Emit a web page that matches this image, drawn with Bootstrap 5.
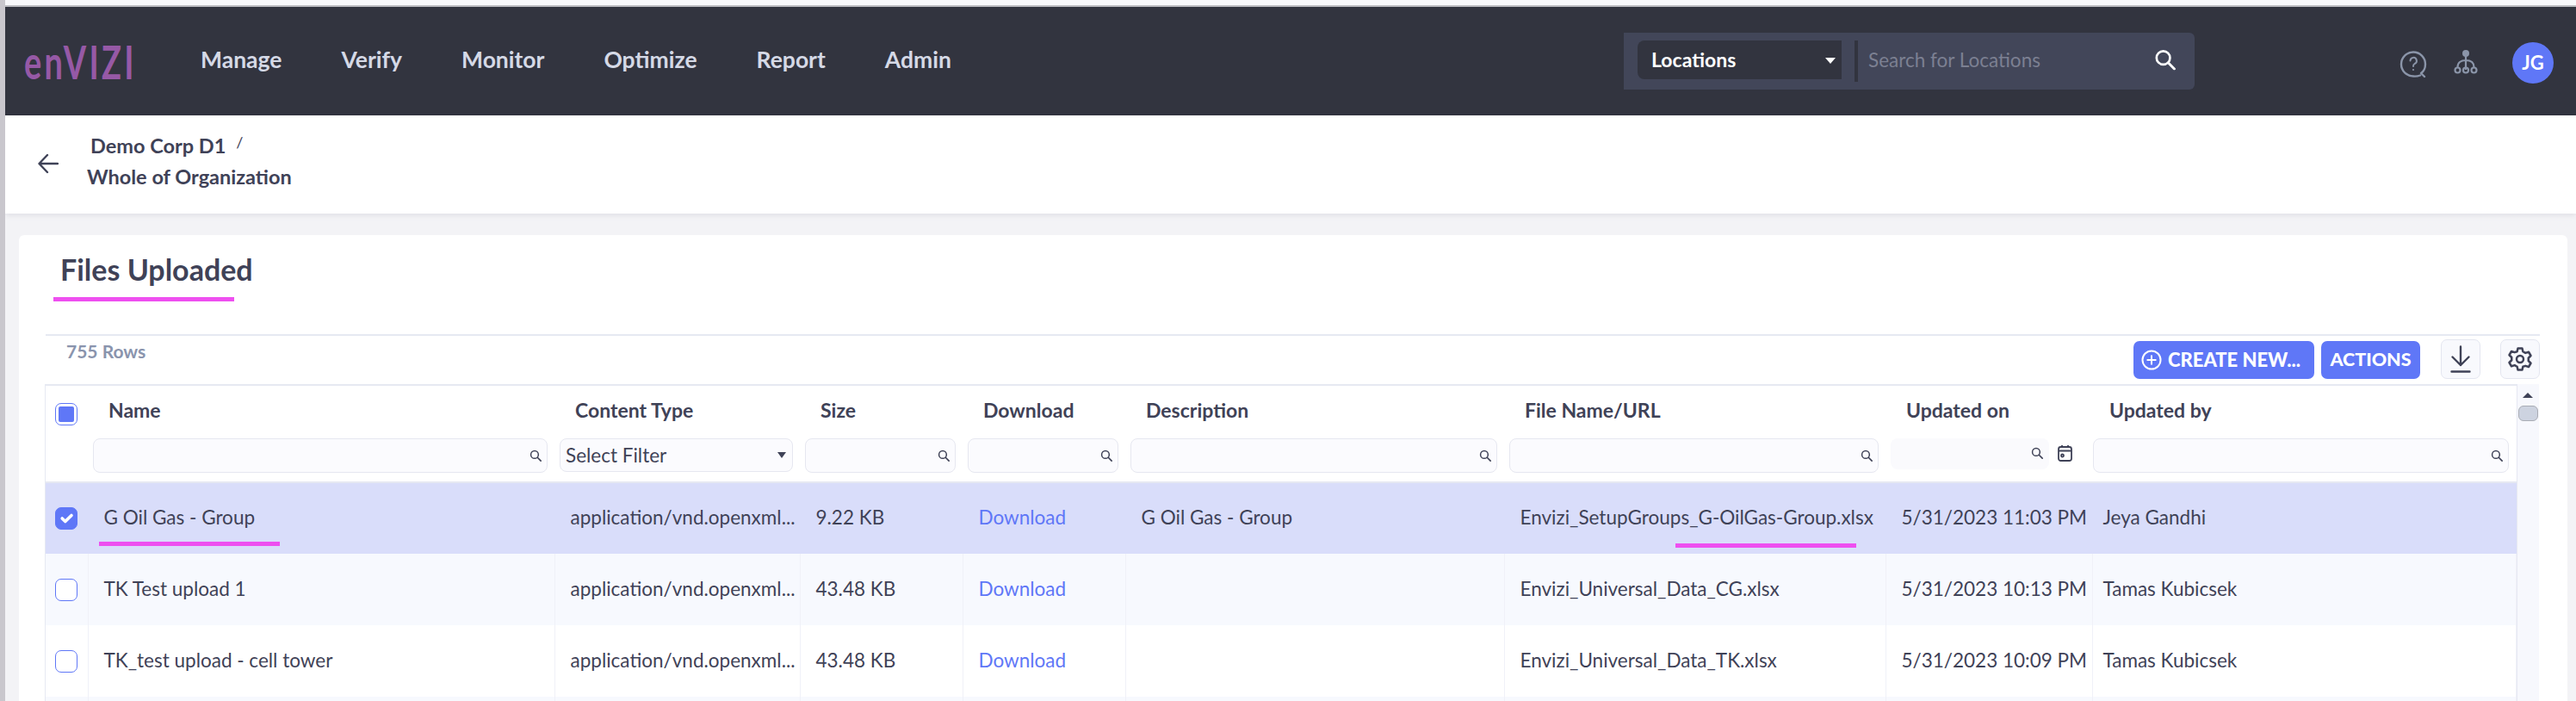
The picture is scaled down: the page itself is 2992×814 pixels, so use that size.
<!DOCTYPE html>
<html lang="en">
<head>
    <meta charset="UTF-8">
    <meta name="viewport" content="width=device-width, initial-scale=1.0">
    <title>Files Uploaded</title>
    <link href="https://cdn.jsdelivr.net/npm/bootstrap@5.3.0/dist/css/bootstrap.min.css" rel="stylesheet">
    <style>
        html, body { height: 100%; overflow: hidden; }
        body {
            font-family: Lato, "Noto Sans", sans-serif;
            font-size: 22.500px;
            color: #3f4257;
            background: #f3f3f6;
            border-left: 6px solid #c9c7cd;
        }
        .top-strip { height: 8px; background: #f8f8fb; border-bottom: 2px solid #bdbdc2; }
        .main-bar { height: 126px; background: #32343f; padding: 0 26px 0 22px; --bs-navbar-nav-link-padding-x: 0; }
        .brand-text {
            width: 205px;
            color: #9659a6;
            font-size: 38px;
            font-weight: 700;
            letter-spacing: 3.300px;
            line-height: 1;
            transform: scaleY(1.4);
            transform-origin: left center;
        }
        .main-links { gap: 69px; margin-top: -2px; }
        .main-links .nav-link { padding: 0; color: #d5d9e6; font-size: 26.500px; font-weight: 700; }
        .search-wrap { width: 663px; height: 66px; margin-right: 238px; background: #424659; border-radius: 0 6px 6px 0; padding: 9px 22px 12px 16px; }
        .scope-box { width: 237px; height: 45px; }
        .scope-box .form-select {
            height: 45px;
            padding: 0 0 0 16px;
            background: #32343f;
            border: 0;
            border-radius: 8px 0 0 8px;
            color: #fff;
            font-size: 23px;
            font-weight: 700;
        }
        .caret-down { position: absolute; width: 0; height: 0; border-left: 6px solid transparent; border-right: 6px solid transparent; border-top: 7px solid #fff; right: 7px; top: 20px; }
        .search-split { width: 4px; height: 48px; margin-left: 15px; background: #32343f; }
        .search-field {
            height: 45px;
            padding: 0 0 0 12px;
            background: transparent;
            border: 0;
            color: #fff;
            font-size: 22.500px;
        }
        .search-field::placeholder { color: #7c8092; }
        .search-field:focus { background: transparent; box-shadow: none; }
        .side-icons { color: #8b95a9; }
        .help-icon { margin-top: 6px; }
        .user-circle { width: 48px; height: 48px; margin: 3px 0 0 40px; background: #5f77f7; color: #fff; font-size: 22px; font-weight: 700; }
        .crumb-bar { height: 114px; background: #fff; box-shadow: 0 2px 6px rgba(60, 60, 90, .1); padding: 0 0 9px 38px; position: relative; }
        .back-arrow { margin-top: 6px; }
        .crumb-text { margin-left: 33px; font-size: 23.500px; font-weight: 700; line-height: 1; }
        .crumb-top { padding-left: 4px; margin-bottom: 13px; }
        .crumb-sep { font-weight: 400; font-size: 18px; margin-left: 12px; vertical-align: 6px; }
        .page-body { padding: 25px 10px 0 16px; }
        .sheet { background: #fff; padding: 0 32px 0 31px; height: 541px; overflow: hidden; border-radius: 6px 6px 0 0; }
        .sheet-title { height: 115px; padding: 20px 0 0 17px; margin: 0; font-size: 34px; font-weight: 700; color: #3f4257; position: relative; }
        .pink-line { position: absolute; height: 5px; width: 210px; background: #ee4ff0; }
        .title-line { left: 9px; top: 72px; }
        .name-line { left: 12px; top: 68px; }
        .file-line { left: 198px; top: 70px; }
        .tool-row { height: 58px; border-top: 2px solid #e6e9f2; padding: 6px 0 0 24px; }
        .row-count { color: #8a94ad; font-size: 21px; font-weight: 700; line-height: 24px; margin-top: 0; }
        .blue-btn { height: 44px; margin-top: 0; padding: 0; background: #5f77f7; border: 0; border-radius: 7px; color: #fff; font-size: 21.500px; font-weight: 900; line-height: 1; }
        .create-btn { width: 210px; gap: 7px; padding-left: 9px; font-size: 22px; }
        .actions-btn { width: 115px; margin-left: 8px; }
        .square-btn { width: 46px; height: 46px; margin-top: -2px; background: #f8f9fd; border: 1px solid #e4e6f0; border-radius: 7px; padding: 0; color: #3f4257; }
        .dl-btn { margin-left: 24px; }
        .cfg-btn { margin-left: 23px; }
        .table-wrap { border-top: 2px solid #e6e9f2; border-left: 1px solid #e6e9f2; margin-left: -1px; }
        .files-table { width: 2869px; table-layout: fixed; margin: 0; color: #3f4257; }
        .files-table > thead > tr > th { border: 0; padding: 0; background: #fff; color: #3f4257; font-size: 23px; font-weight: 700; }
        .head-labels > th { height: 61px; padding: 0 0 4px 24px !important; vertical-align: middle; }
        .head-labels > th.tick-head { padding: 0 !important; }
        .head-filters > th { height: 51px; padding: 0 8px 9px 6px !important; border-bottom: 2px solid #e6e8f2 !important; vertical-align: top; }
        .files-table > tbody > tr > td {
            height: 83px;
            padding: 0 8px 2px 18px;
            border: 0;
            border-right: 1px solid #f0f1f8;
            vertical-align: middle;
            white-space: nowrap;
            overflow: hidden;
            color: #3f4257;
            font-size: 22.500px;
        }
        .files-table > tbody > tr.row-picked > td { background: #d9ddfa; border-right-color: #d9ddfa; }
        .files-table > tbody > tr.row-tint > td { background: #f7f9fe; }
        .files-table > tbody > tr.row-plain > td { background: #fff; }
        .files-table > tbody > tr > td.tick-cell { padding: 0 0 0 11px; }
        .files-table a { color: #5f77f7; text-decoration: none; }
        .tick-box.form-check-input { width: 26px; height: 26px; margin: 0; border: 1.5px solid #5f77f7; border-radius: 7px; background-color: #fff; display: block; }
        .tick-box.form-check-input:checked { background-color: #5f77f7; }
        .tick-all { width: 26px; height: 26px; margin: 4px 0 0 11px; border: 1.5px solid #5f77f7; border-radius: 7px; padding: 3px; display: block; }
        .tick-all i { display: block; width: 100%; height: 100%; background: #5f77f7; border-radius: 2px; }
        .filter-box { position: relative; }
        .filter-box .form-control, .filter-box .form-select {
            height: 40px;
            padding: 0 6px;
            background: #fbfbfe;
            border: 1.5px solid #e6e7f0;
            border-radius: 8px;
            color: #3f4257;
            font-size: 22.500px;
        }
        .filter-box .form-select { background-image: none; height: 39px; }
        .filter-box .caret-down { border-top-color: #3f4257; right: 8px; top: 16px; border-left-width: 5px; border-right-width: 5px; }
        .filter-box .form-control.no-edge { border-color: transparent; background: #fafafd; height: 36px; }
        .mini-search { position: absolute; right: 7px; top: 13px; color: #3f4257; }
        .date-search { top: 10px; }
        .date-box { width: 184px; flex-shrink: 0; }
        .date-icon { margin: 7px 0 0 10px; color: #3f4257; flex-shrink: 0; }
        .scroll-side { width: 26px; height: 400px; background: #f7f8fd; border-left: 1px solid #e6e8f2; }
        .scroll-up { width: 0; height: 0; margin: 10px auto 0; border-left: 6px solid transparent; border-right: 6px solid transparent; border-bottom: 6px solid #3f4257; }
        .scroll-thumb { width: 23px; height: 18px; margin: 9px 0 0 1px; background: #cdd3e0; border: 1px solid #a9acb4; border-radius: 6px; }
        .col-tick { width: 49px; } .col-name { width: 542px; } .col-type { width: 285px; }
        .col-size { width: 189px; } .col-link { width: 189px; } .col-desc { width: 440px; }
        .col-file { width: 443px; } .col-date { width: 240px; } .col-user { width: 492px; }
        .files-table > thead > tr.head-filters > th.user-filter { padding-left: 1px !important; }
        .files-table > tbody > tr > td.user-cell { padding-left: 12px; }
        .files-table > thead > tr.head-labels > th.user-head { padding-left: 20px !important; }
        .org-icon { margin-left: 31px; }
    </style>
</head>
<body>
    <svg width="0" height="0" class="position-absolute">
        <symbol id="ico-search" viewBox="0 0 16 16">
            <circle cx="6.800" cy="6.800" r="5" fill="none" stroke="currentColor" stroke-width="1.700"/>
            <path d="M10.600 10.600 15 15" stroke="currentColor" stroke-width="1.900" stroke-linecap="round"/>
        </symbol>
    </svg>

    <div class="top-strip"></div>

    <nav class="navbar navbar-expand main-bar d-flex flex-nowrap align-items-center">
        <div class="brand-text">enVIZI</div>
        <div class="navbar-nav main-links me-auto">
            <a class="nav-link" href="#">Manage</a>
            <a class="nav-link" href="#">Verify</a>
            <a class="nav-link" href="#">Monitor</a>
            <a class="nav-link" href="#">Optimize</a>
            <a class="nav-link" href="#">Report</a>
            <a class="nav-link" href="#">Admin</a>
        </div>
        <div class="search-wrap d-flex align-items-start flex-shrink-0">
            <div class="scope-box position-relative flex-shrink-0">
                <select class="form-select"><option>Locations</option></select>
                <span class="caret-down"></span>
            </div>
            <div class="search-split flex-shrink-0"></div>
            <input class="form-control search-field flex-grow-1" type="text" placeholder="Search for Locations">
            <svg class="text-white mt-2 flex-shrink-0" width="25" height="28" viewBox="0 0 16 16"><use href="#ico-search"/></svg>
        </div>
        <div class="side-icons d-flex align-items-center flex-shrink-0">
            <svg class="help-icon" width="32" height="33" viewBox="0 0 32 33" fill="none" stroke="currentColor" stroke-width="2.400">
                <path d="M24 29.500C20 31 16 30.500 16 30.500A14 14 0 1 1 30 16.500C30 21 28 25 25 27L29 31" stroke-linecap="round" stroke-linejoin="round"/>
                <path d="M12.500 12.500A3.700 3.700 0 1 1 17.600 16C16.400 16.700 16 17.400 16 19" stroke-width="2" stroke-linecap="round"/>
                <circle cx="16" cy="23" r="1.100" fill="currentColor" stroke="none"/>
            </svg>
            <svg class="org-icon" width="28" height="29" viewBox="0 0 28 29" fill="none" stroke="currentColor" stroke-width="2.200">
                <circle cx="14" cy="5" r="4" fill="currentColor" stroke="none"/>
                <path d="M14 8V24M14 13C8 13 4.500 16 4.500 21M14 13C20 13 23.500 16 23.500 21"/>
                <circle cx="4.500" cy="24.500" r="3"/>
                <circle cx="14" cy="24.500" r="3"/>
                <circle cx="23.500" cy="24.500" r="3"/>
            </svg>
            <div class="user-circle rounded-circle d-flex align-items-center justify-content-center">JG</div>
        </div>
    </nav>

    <div class="crumb-bar d-flex align-items-center">
        <svg class="back-arrow" width="24" height="26" viewBox="0 0 24 26" fill="none" stroke="#3f4257" stroke-width="2.400" stroke-linecap="round" stroke-linejoin="round">
            <path d="M23 13H2M11 3 1.500 13 11 23"/>
        </svg>
        <div class="crumb-text">
            <div class="crumb-top">Demo Corp D1<span class="crumb-sep">/</span></div>
            <div>Whole of Organization</div>
        </div>
    </div>

    <div class="page-body">
        <div class="sheet">
            <h1 class="sheet-title">Files Uploaded<span class="pink-line title-line"></span></h1>
            <div class="tool-row d-flex align-items-start">
                <div class="row-count me-auto">755 Rows</div>
                <button class="btn blue-btn create-btn d-flex align-items-center" type="button">
                    <svg width="24" height="24" viewBox="0 0 24 24" fill="none" stroke="#fff" stroke-width="2">
                        <circle cx="12" cy="12" r="10.500"/><path d="M12 6.500V17.500M6.500 12H17.500"/>
                    </svg>
                    CREATE NEW...
                </button>
                <button class="btn blue-btn actions-btn" type="button">ACTIONS</button>
                <button class="btn square-btn dl-btn" type="button">
                    <svg width="24" height="32" viewBox="0 0 24 32" fill="none" stroke="currentColor" stroke-width="2.400" stroke-linecap="round" stroke-linejoin="round">
                        <path d="M12 1.500V23M2.500 13.500 12 23l9.500-9.500M1.500 30.500H22.500"/>
                    </svg>
                </button>
                <button class="btn square-btn cfg-btn" type="button">
                    <svg width="30" height="32" viewBox="0 0 24 24" fill="none" stroke="currentColor" stroke-width="2" stroke-linejoin="round">
                        <path d="M10 2h4l.7 3 2.300 1.300 3-.9 2 3.400-2.200 2.200v2.600l2.200 2.200-2 3.400-3-.9L14.700 19 14 22h-4l-.7-3L7 17.700l-3 .9-2-3.400 2.200-2.200v-2.600L2 8.200l2-3.400 3 .9L9.300 5z"/>
                        <circle cx="12" cy="12" r="3.200"/>
                    </svg>
                </button>
            </div>
            <div class="d-flex align-items-start">
                <div class="table-wrap">
                    <table class="table files-table">
                        <colgroup>
                            <col class="col-tick"><col class="col-name"><col class="col-type"><col class="col-size"><col class="col-link"><col class="col-desc"><col class="col-file"><col class="col-date"><col class="col-user">
                        </colgroup>
                        <thead>
                            <tr class="head-labels">
                                <th class="tick-head"><span class="tick-all"><i></i></span></th>
                                <th>Name</th>
                                <th>Content Type</th>
                                <th>Size</th>
                                <th>Download</th>
                                <th>Description</th>
                                <th>File Name/URL</th>
                                <th>Updated on</th>
                                <th class="user-head">Updated by</th>
                            </tr>
                            <tr class="head-filters">
                                <th></th>
                                <th><div class="filter-box"><input class="form-control" type="text"><svg class="mini-search" width="14" height="14"><use href="#ico-search"/></svg></div></th>
                                <th><div class="filter-box"><select class="form-select"><option>Select Filter</option></select><span class="caret-down"></span></div></th>
                                <th><div class="filter-box"><input class="form-control" type="text"><svg class="mini-search" width="14" height="14"><use href="#ico-search"/></svg></div></th>
                                <th><div class="filter-box"><input class="form-control" type="text"><svg class="mini-search" width="14" height="14"><use href="#ico-search"/></svg></div></th>
                                <th><div class="filter-box"><input class="form-control" type="text"><svg class="mini-search" width="14" height="14"><use href="#ico-search"/></svg></div></th>
                                <th><div class="filter-box"><input class="form-control" type="text"><svg class="mini-search" width="14" height="14"><use href="#ico-search"/></svg></div></th>
                                <th>
                                    <div class="d-flex">
                                        <div class="filter-box date-box"><input class="form-control no-edge" type="text"><svg class="mini-search date-search" width="14" height="14"><use href="#ico-search"/></svg></div>
                                        <svg class="date-icon" width="17" height="20" viewBox="0 0 17 20" fill="none" stroke="currentColor" stroke-width="1.800">
                                            <rect x="1" y="3" width="15" height="16" rx="2.500"/><path d="M1 7.500H16M5 1V4M12 1V4"/><circle cx="5.500" cy="13" r="1.500"/>
                                        </svg>
                                    </div>
                                </th>
                                <th class="user-filter"><div class="filter-box"><input class="form-control" type="text"><svg class="mini-search" width="14" height="14"><use href="#ico-search"/></svg></div></th>
                            </tr>
                        </thead>
                        <tbody>
                            <tr class="row-picked">
                                <td class="tick-cell"><input class="form-check-input tick-box" type="checkbox" checked></td>
                                <td class="position-relative">G Oil Gas - Group<span class="pink-line name-line"></span></td>
                                <td>application/vnd.openxml...</td>
                                <td>9.22 KB</td>
                                <td><a href="#">Download</a></td>
                                <td>G Oil Gas - Group</td>
                                <td class="position-relative">Envizi_SetupGroups_G-OilGas-Group.xlsx<span class="pink-line file-line"></span></td>
                                <td>5/31/2023 11:03 PM</td>
                                <td class="user-cell">Jeya Gandhi</td>
                            </tr>
                            <tr class="row-tint">
                                <td class="tick-cell"><input class="form-check-input tick-box" type="checkbox"></td>
                                <td>TK Test upload 1</td>
                                <td>application/vnd.openxml...</td>
                                <td>43.48 KB</td>
                                <td><a href="#">Download</a></td>
                                <td></td>
                                <td>Envizi_Universal_Data_CG.xlsx</td>
                                <td>5/31/2023 10:13 PM</td>
                                <td class="user-cell">Tamas Kubicsek</td>
                            </tr>
                            <tr class="row-plain">
                                <td class="tick-cell"><input class="form-check-input tick-box" type="checkbox"></td>
                                <td>TK_test upload - cell tower</td>
                                <td>application/vnd.openxml...</td>
                                <td>43.48 KB</td>
                                <td><a href="#">Download</a></td>
                                <td></td>
                                <td>Envizi_Universal_Data_TK.xlsx</td>
                                <td>5/31/2023 10:09 PM</td>
                                <td class="user-cell">Tamas Kubicsek</td>
                            </tr>
                            <tr class="row-tint">
                                <td></td><td></td><td></td><td></td><td></td><td></td><td></td><td></td><td></td>
                            </tr>
                        </tbody>
                    </table>
                </div>
                <div class="scroll-side">
                    <div class="scroll-up"></div>
                    <div class="scroll-thumb"></div>
                </div>
            </div>
        </div>
    </div>
</body>
</html>
